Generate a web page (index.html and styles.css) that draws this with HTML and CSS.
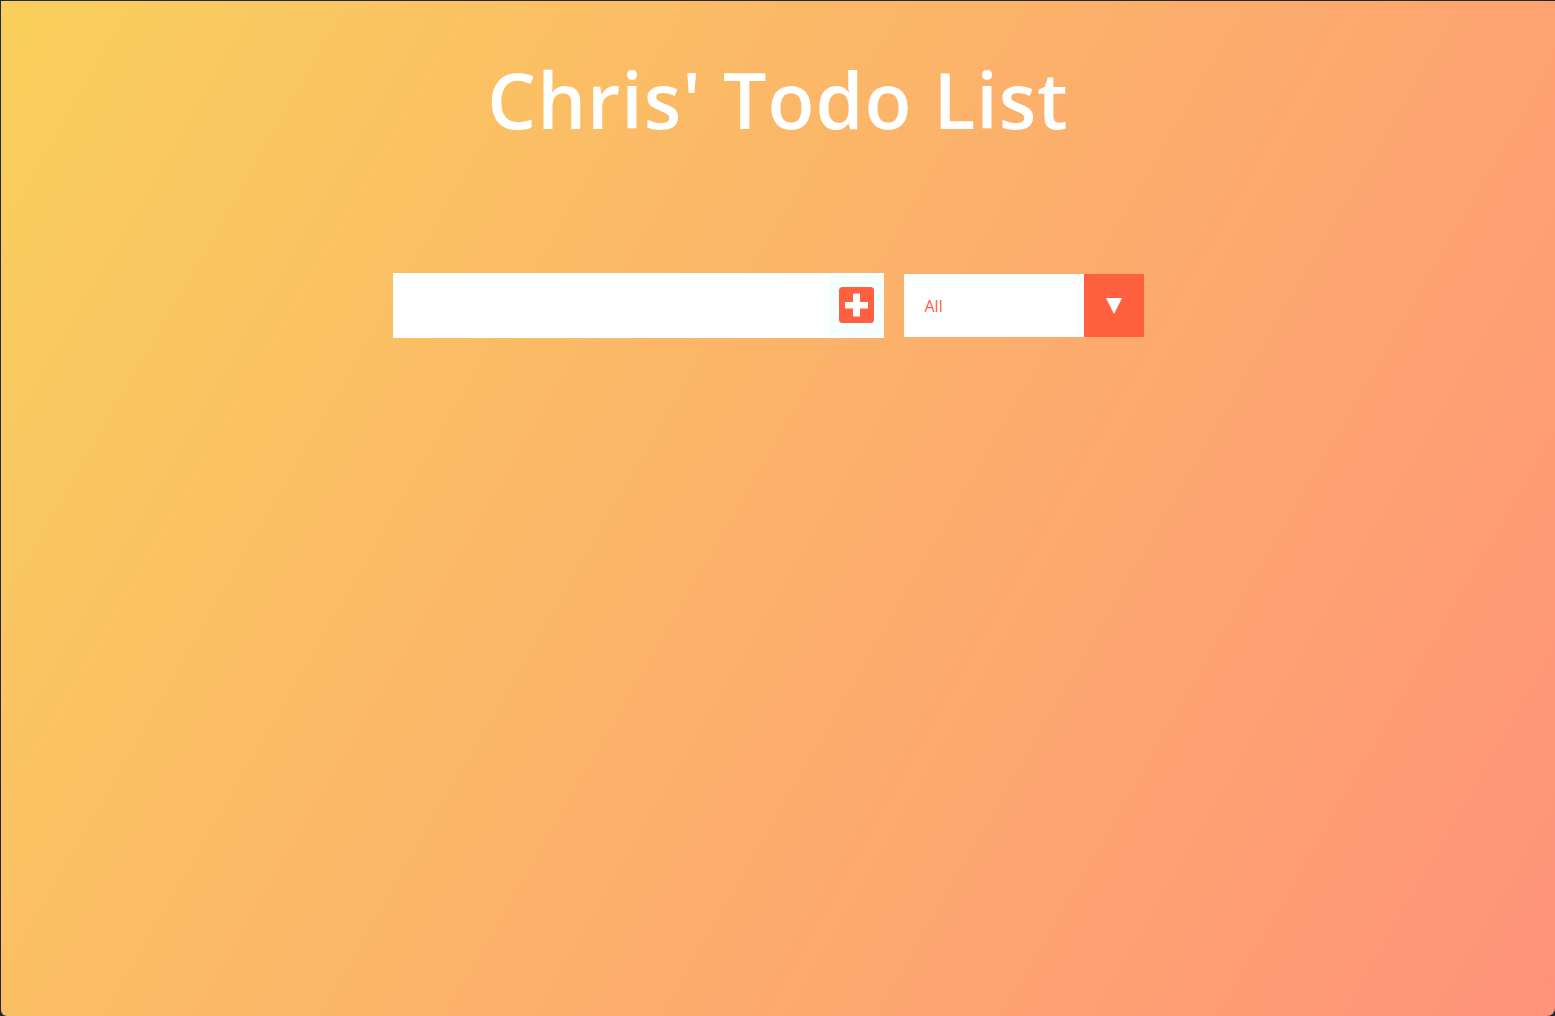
FILE: index.html
```html
<!DOCTYPE html>
<html lang="en">
<head>
<meta charset="utf-8">
<title>Chris' Todo List</title>
<link rel="stylesheet" href="styles.css">
</head>
<body>
<div class="app">
  <header class="header">
    <h1 class="title">Chris' Todo List</h1>
  </header>
  <form class="form">
    <div class="add">
      <input class="todo-input" type="text">
      <button class="todo-button" type="button" aria-label="Add">
        <svg width="35" height="36" viewBox="0 0 35 36"><rect x="0" y="0" width="35" height="36" rx="3.5" fill="#ff6140"/><rect x="6" y="15" width="23" height="6.5" fill="#fff"/><rect x="14" y="6.5" width="7" height="23" fill="#fff"/></svg>
      </button>
    </div>
    <div class="select">
      <span class="select-value">All</span>
      <span class="select-arrow"><svg width="16" height="16" viewBox="0 0 16 16"><polygon points="0,0 16,0 8,16" fill="#fff"/></svg></span>
    </div>
  </form>
</div>
</body>
</html>
```
FILE: styles.css
```css
* { box-sizing: border-box; }
html, body { margin: 0; padding: 0; height: 100%; }
body {
  background: #1d2a33;
  padding: 1px 0 0 1px;
  font-family: "Open Sans", "DejaVu Sans", sans-serif;
}
.app {
  height: 1015px;
  border-radius: 0 0 8px 6px;
  background: linear-gradient(120deg, #f9d05c 0%, #ff9279 100%);
  overflow: hidden;
}
.header {
  height: 196px;
  display: flex;
  justify-content: center;
  align-items: center;
}
.title {
  margin: 0;
  color: #fff;
  font-weight: 600;
  font-size: 77px;
  line-height: 1;
  letter-spacing: 1px;
}
.form {
  height: 216px;
  display: flex;
  justify-content: center;
  align-items: center;
  padding-right: 20px;
  gap: 20px;
}
.add {
  display: flex;
  height: 65px;
}
.todo-input {
  width: 436px;
  height: 65px;
  border: none;
  outline: none;
  background: #fff;
  padding: 8px;
  font-size: 32px;
  font-family: inherit;
}
.todo-button {
  width: 55px;
  height: 65px;
  border: none;
  padding: 0 0 1px 0;
  margin: 0;
  background: #f5fffe;
  display: flex;
  align-items: center;
  justify-content: center;
  cursor: pointer;
}
.todo-button svg { display: block; margin-left: 10px; margin-right: 10px; }
.select {
  display: flex;
  width: 240px;
  height: 63px;
  background: #fff;
}
.select-value {
  flex: 1;
  display: flex;
  align-items: center;
  padding-left: 21px;
  padding-top: 1px;
  color: #ff6140;
  font-size: 16px;
}
.select-arrow {
  width: 60px;
  background: #ff6140;
  display: flex;
  align-items: center;
  justify-content: center;
  padding-top: 2px;
}
.select-arrow svg { display: block; }
```
